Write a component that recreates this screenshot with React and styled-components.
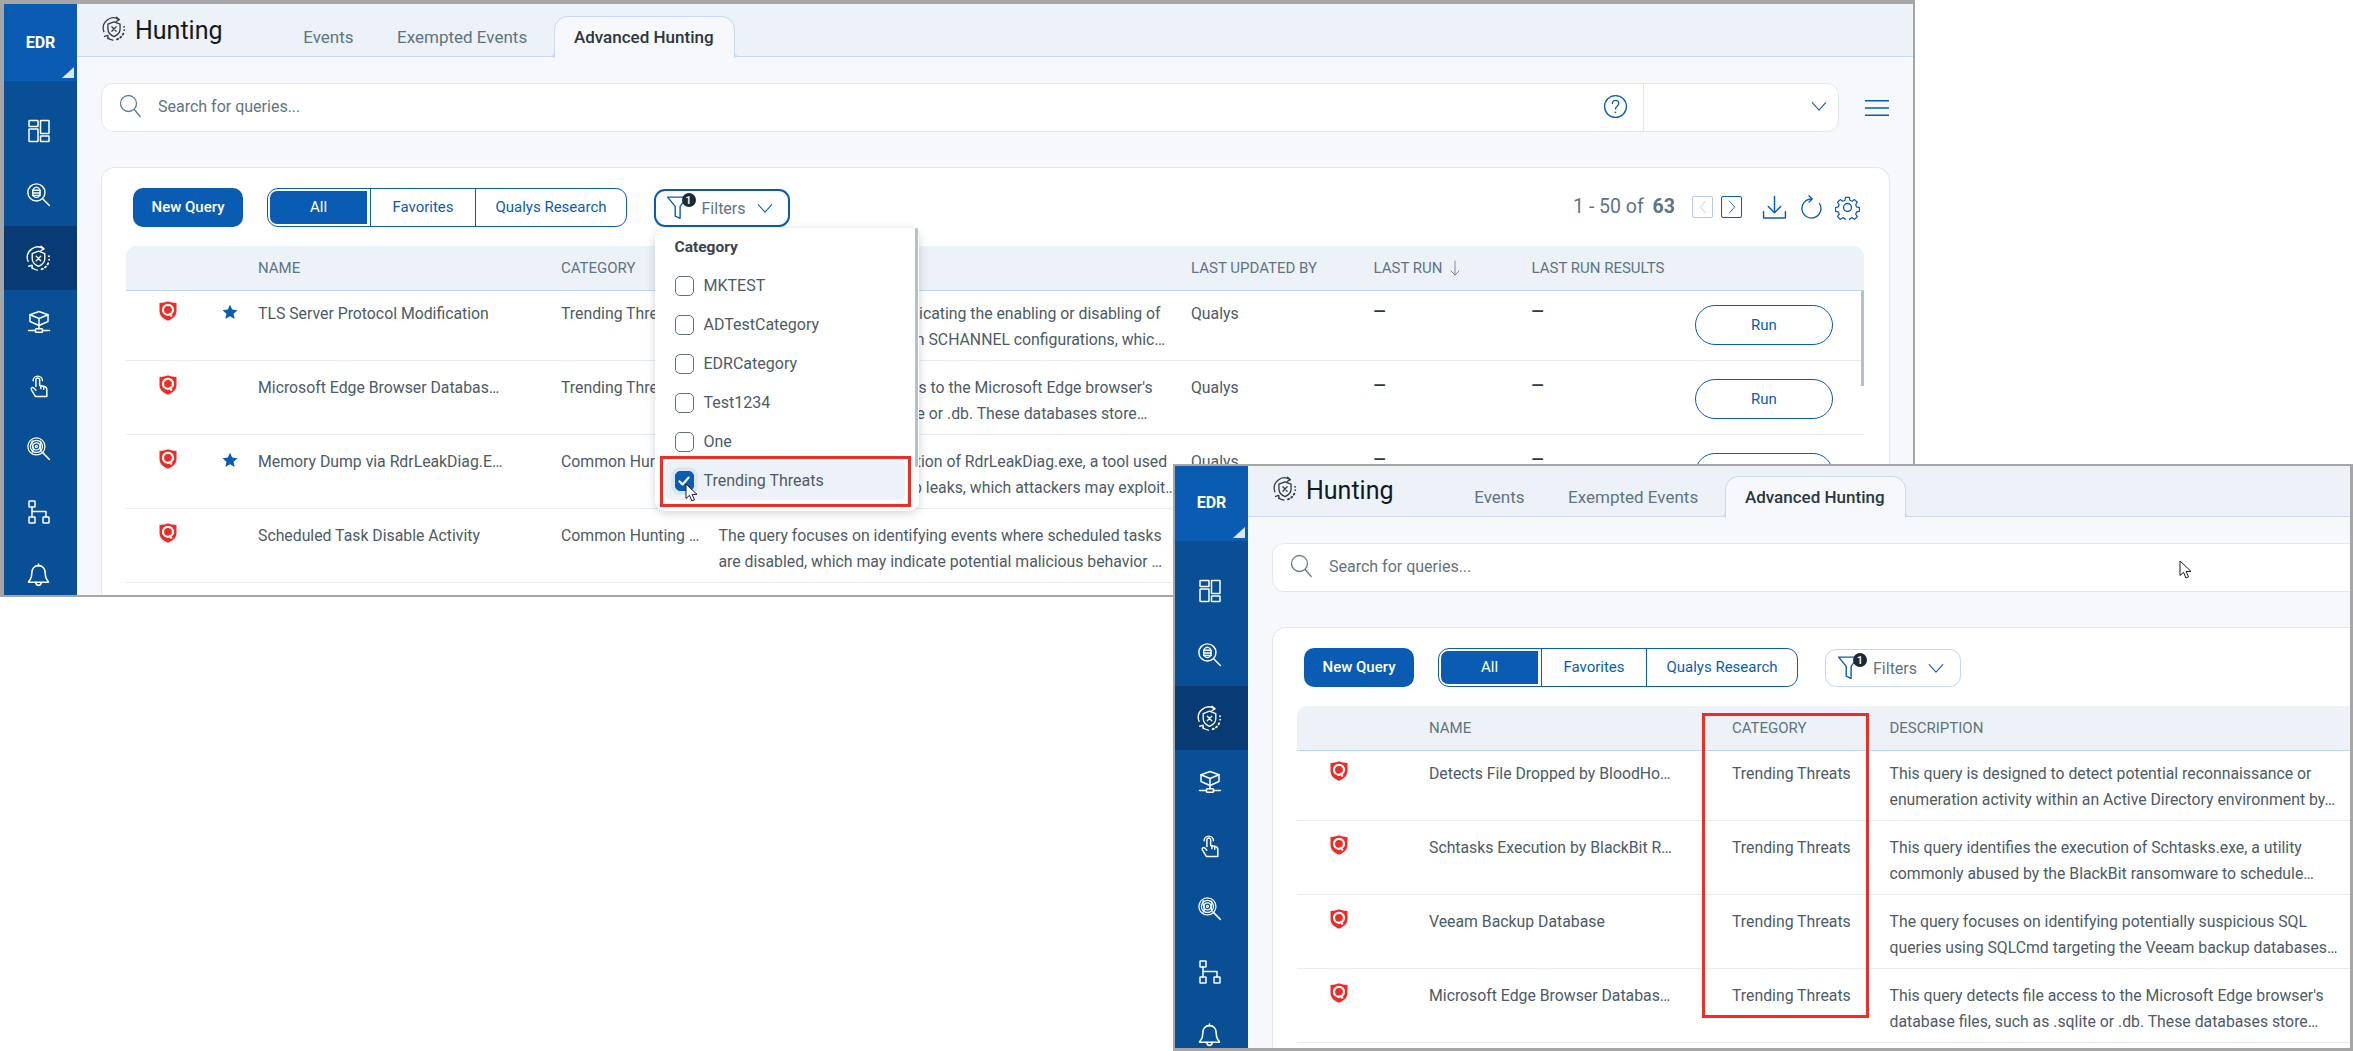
import React from "react";
import styled, { createGlobalStyle } from "styled-components";

const BLUE = "#0a5cb2";
const GRAY_TEXT = "#4d5b66";
const MUTED = "#5f7482";

const GlobalStyle = createGlobalStyle`
    html, body {
        margin: 0;
        padding: 0;
        background: #ffffff;
    }
    * {
        box-sizing: border-box;
    }
    body {
        font-family: Roboto, "Liberation Sans", sans-serif;
        color: ${GRAY_TEXT};
    }
`;

const Desktop = styled.div`
    position: relative;
    width: 2353px;
    height: 1051px;
    overflow: hidden;
    background: #ffffff;
`;

const Window = styled.div`
    position: absolute;
    left: ${(props) => props.$left}px;
    top: ${(props) => props.$top}px;
    width: ${(props) => props.$width}px;
    height: ${(props) => props.$height}px;
    border-style: solid;
    border-color: #a6a6a6;
    border-width: ${(props) => props.$borders};
    overflow: hidden;
    background: #f6f8fb;
`;

const Screen = styled.div`
    display: flex;
    height: calc(100% + ${(props) => props.$lift || 0}px);
    margin-top: -${(props) => props.$lift || 0}px;
`;

const Sidebar = styled.nav`
    flex: none;
    width: 73px;
    background: #084f95;
    display: flex;
    flex-direction: column;
    overflow: hidden;
`;

const Brand = styled.div`
    position: relative;
    flex: none;
    height: 77px;
    background: ${BLUE};
    color: #ffffff;
    font-size: 16px;
    font-weight: 700;
    display: flex;
    align-items: center;
    justify-content: center;
    margin-bottom: 18px;
    &::after {
        content: "";
        position: absolute;
        right: 3px;
        bottom: 3px;
        border-style: solid;
        border-width: 0 0 11px 12px;
        border-color: transparent transparent #dbe7f3 transparent;
    }
`;

const NavItem = styled.div`
    flex: none;
    height: 63.5px;
    display: flex;
    align-items: center;
    justify-content: center;
    padding: 1px 4px 0 0;
    color: #ffffff;
    background: ${(props) => (props.$active ? "#083a73" : "transparent")};
`;

const Main = styled.div`
    flex: none;
    width: 1836px;
    display: flex;
    flex-direction: column;
`;

const TopBar = styled.header`
    height: 53px;
    flex: none;
    background: #edf2f9;
    border-bottom: 1px solid #c9dbee;
    display: flex;
    align-items: flex-start;
    padding-left: 24px;
`;

const TitleIcon = styled.div`
    margin-top: 12px;
    margin-right: 8px;
    color: #2f3b45;
    display: flex;
`;

const PageTitle = styled.h1`
    margin: 12px 59px 0 0;
    font-size: 25px;
    font-weight: 400;
    line-height: 30px;
    color: #14191e;
`;

const Tabs = styled.div`
    display: flex;
    align-items: flex-end;
    height: 53px;
`;

const Tab = styled.div`
    position: relative;
    height: ${(props) => (props.$active ? "42px" : "41px")};
    padding: 0 21.75px;
    display: flex;
    align-items: center;
    font-size: 17px;
    color: ${MUTED};
    ${(props) =>
        props.$active &&
        `
        margin: 0 0 -1px 5px;
        padding: 0 20px 1px 19px;
        background: #f6f8fb;
        color: #2a3640;
        font-weight: 500;
        border: 1px solid #c9dbee;
        border-bottom: none;
        border-radius: 14px 14px 0 0;
        &::before, &::after {
            content: "";
            position: absolute;
            bottom: 1px;
            width: 4px;
            height: 8px;
            border-bottom: 1px solid #c9dbee;
        }
        &::before {
            left: -5px;
            border-right: 1px solid #c9dbee;
            border-bottom-right-radius: 5px;
        }
        &::after {
            right: -5px;
            border-left: 1px solid #c9dbee;
            border-bottom-left-radius: 5px;
        }
    `}
`;

const SearchRow = styled.div`
    margin: 26px 0 0 24px;
    display: flex;
    align-items: center;
    height: 49px;
    flex: none;
`;

const SearchBox = styled.div`
    width: 1738px;
    height: 49px;
    background: #ffffff;
    border: 1px solid #e2e7ed;
    border-radius: 12px;
    display: flex;
    align-items: center;
    padding: 0 0 3px 16px;
`;

const SearchIconWrap = styled.div`
    display: flex;
    color: #5d7c8f;
    margin-right: 16px;
`;

const SearchPlaceholder = styled.div`
    flex: 1;
    font-size: 16px;
    color: ${MUTED};
`;

const HelpWrap = styled.div`
    display: flex;
    color: ${BLUE};
    margin-right: 15px;
`;

const ScopeSelect = styled.div`
    width: 195px;
    align-self: stretch;
    margin-bottom: -3px;
    padding: 0 10px 3px 0;
    border-left: 1px solid #e2e7ed;
    display: flex;
    align-items: center;
    justify-content: flex-end;
    color: ${BLUE};
`;

const MenuButton = styled.div`
    margin-left: 26px;
    display: flex;
    color: ${BLUE};
`;

const Card = styled.section`
    margin: 35px 0 0 24px;
    width: 1789px;
    flex: 1;
    background: #ffffff;
    border: 1px solid #e2e7ed;
    border-bottom: none;
    border-radius: 14px 14px 0 0;
    padding: 19px 25px 0 24px;
`;

const Toolbar = styled.div`
    display: flex;
    align-items: center;
    height: 40px;
    padding: 0 4px 0 7px;
`;

const PrimaryButton = styled.button`
    width: 110px;
    height: 39px;
    margin-right: 24px;
    background: ${BLUE};
    color: #ffffff;
    border: none;
    border-radius: 10px;
    font-family: inherit;
    font-size: 15px;
    font-weight: 500;
`;

const Segments = styled.div`
    display: flex;
    height: 39px;
    border: 1.5px solid ${BLUE};
    border-radius: 11px;
    overflow: hidden;
    margin-right: 26.5px;
`;

const Segment = styled.div`
    width: ${(props) => props.$width}px;
    display: flex;
    align-items: center;
    justify-content: center;
    font-size: 15px;
    color: ${BLUE};
    border-left: ${(props) => (props.$first ? "none" : `1.5px solid ${BLUE}`)};
    ${(props) =>
        props.$active &&
        `
        color: #ffffff;
        background: ${BLUE};
        background-clip: content-box;
        padding: 2px 3px 2px 2px;
        border-radius: 9px 0 0 9px;
    `}
`;

const FilterWrap = styled.div`
    position: relative;
    margin-top: 2px;
`;

const FilterButton = styled.div`
    position: relative;
    width: 136px;
    height: 38px;
    border-radius: 11px;
    border: ${(props) => (props.$open ? `2.5px solid ${BLUE}` : "1px solid #c5d8ee")};
    display: flex;
    align-items: center;
    padding-left: ${(props) => (props.$open ? "10px" : "11.5px")};
    font-size: 16px;
    color: ${MUTED};
    gap: 10px;
`;

const FunnelWrap = styled.div`
    position: relative;
    display: flex;
    color: ${BLUE};
`;

const CountBadge = styled.span`
    position: absolute;
    right: -4px;
    top: -2px;
    width: 14px;
    height: 14px;
    border-radius: 50%;
    background: #1d2a35;
    color: #ffffff;
    font-size: 11px;
    font-weight: 500;
    display: flex;
    align-items: center;
    justify-content: center;
`;

const ChevronWrap = styled.div`
    display: flex;
    color: ${BLUE};
`;

const FilterMenu = styled.div`
    position: absolute;
    left: 1px;
    top: 39px;
    width: 264px;
    height: 283px;
    background: #ffffff;
    border-radius: 10px;
    box-shadow: 0 2px 10px rgba(40, 60, 80, 0.22);
    padding: 8px 9px 0 10px;
    z-index: 5;
    &::after {
        content: "";
        position: absolute;
        right: 1px;
        top: 0;
        width: 3px;
        height: 239px;
        background: #b3c1cc;
        border-radius: 2px;
    }
`;

const MenuTitle = styled.div`
    font-size: 15.5px;
    font-weight: 700;
    line-height: 22px;
    color: #38444e;
    padding-left: 10px;
    margin-bottom: 8px;
`;

const MenuRow = styled.div`
    position: relative;
    width: 240.5px;
    height: 39px;
    padding-left: 10px;
    display: flex;
    align-items: center;
    gap: 10px;
    font-size: 16px;
    border-radius: 6px;
    ${(props) =>
        props.$selected &&
        `
        background: #edf2f9;
        &::after {
            content: "";
            position: absolute;
            left: -4.5px;
            right: -6px;
            top: -5px;
            bottom: -7px;
            border: 3px solid #ee2e24;
        }
    `}
`;

const CheckBox = styled.span`
    width: 19px;
    height: 20px;
    flex: none;
    border-radius: 5px;
    border: 1px solid ${(props) => (props.$checked ? BLUE : "#5d7180")};
    background: ${(props) => (props.$checked ? BLUE : "#ffffff")};
    box-shadow: ${(props) => (props.$checked ? "0 0 0 4px #dbe6f3" : "none")};
    display: flex;
    align-items: center;
    justify-content: center;
    color: #ffffff;
`;

const PagerArea = styled.div`
    margin-left: auto;
    display: flex;
    align-items: center;
    color: ${BLUE};
`;

const PageCount = styled.div`
    font-size: 19.5px;
    color: ${MUTED};
    margin: 0 17px 2px 0;
    white-space: nowrap;
    b {
        font-weight: 700;
        margin-left: 4px;
    }
`;

const PageStep = styled.div`
    width: 21px;
    height: 22px;
    border: 1.5px solid ${(props) => (props.$disabled ? "#b7c9da" : BLUE)};
    color: ${(props) => (props.$disabled ? "#b7c9da" : BLUE)};
    border-radius: 2px;
    display: flex;
    align-items: center;
    justify-content: center;
    margin-right: ${(props) => (props.$disabled ? "8px" : "20px")};
`;

const ToolIcon = styled.div`
    display: flex;
    margin-right: ${(props) => props.$gap || 0}px;
`;

const Table = styled.div`
    position: relative;
    margin-top: 19px;
`;

const columns = "84px 40px 311px 157.5px 472.5px 182.5px 158px 163.5px 169px";

const HeadRow = styled.div`
    display: grid;
    grid-template-columns: ${columns};
    align-items: center;
    height: 45px;
    background: #edf2f9;
    border-bottom: 1px solid #bcd6ee;
    border-radius: 10px 10px 0 0;
`;

const HeadCell = styled.div`
    font-size: 15px;
    text-transform: uppercase;
    color: ${MUTED};
    display: flex;
    align-items: center;
    gap: 5px;
    padding-left: ${(props) => (props.$name ? "8px" : "0")};
`;

const Row = styled.div`
    display: grid;
    grid-template-columns: ${columns};
    align-items: start;
    height: ${(props) => (props.$first ? "70px" : "74px")};
    padding-top: ${(props) => (props.$first ? "10px" : "14px")};
    border-bottom: 1px solid #e6ebf0;
    font-size: 15.8px;
    line-height: 25.5px;
`;

const LogoCell = styled.div`
    display: flex;
    justify-content: center;
`;

const StarCell = styled.div`
    display: flex;
    justify-content: center;
    padding-top: 3px;
    color: ${BLUE};
`;

const NameCell = styled.div`
    padding-left: 8px;
    white-space: nowrap;
`;

const TextCell = styled.div`
    white-space: nowrap;
`;

const DescLine = styled.div`
    white-space: nowrap;
`;

const Dash = styled.div`
    font-weight: 700;
    color: #2c3a45;
    line-height: 22px;
`;

const RunButton = styled.button`
    width: 138px;
    height: 40px;
    margin-top: 4px;
    background: #ffffff;
    border: 1.5px solid ${BLUE};
    border-radius: 20px;
    color: ${BLUE};
    font-family: inherit;
    font-size: 15px;
`;

const ScrollThumb = styled.div`
    position: absolute;
    right: 0;
    top: 45px;
    width: 3px;
    height: 95px;
    background: #b3c1cc;
`;

const Callout = styled.div`
    position: absolute;
    left: 527px;
    top: 247px;
    width: 167px;
    height: 305px;
    border: 3px solid #ee2e24;
    z-index: 4;
`;

const CursorMark = styled.svg`
    position: absolute;
    left: ${(props) => props.$x}px;
    top: ${(props) => props.$y}px;
    z-index: 6;
`;

const Line = ({ size = 22, children, sw = 1.4 }) => (
    <svg
        width={size}
        height={size}
        viewBox="0 0 24 24"
        fill="none"
        stroke="currentColor"
        strokeWidth={sw}
        strokeLinecap="round"
        strokeLinejoin="round"
    >
        {children}
    </svg>
);

const HuntingIcon = ({ size = 26, sw = 1.2 }) => (
    <Line size={size} sw={sw}>
        <path d="M12 5.500l5.600 2.100v4.500c0 3.400-2.500 5.700-5.600 6.900-3.100-1.200-5.600-3.500-5.600-6.900V7.600z" />
        <path d="M10 10l4 4M14 10l-4 4" />
        <path d="M2.700 14.500A9.400 9.400 0 0 1 16.500 3.200" />
        <path d="M14.300 1.100l2.600 2.300-2.900 1.700" />
        <path d="M6.200 20.300a9.400 9.400 0 0 0 4.800 2" />
        <path d="M3.300 18.900l3-1 .2 3.100" />
        <path d="M21.300 10v.01M21.500 13v.01M20.600 16.300l-.5.9M18.600 19.200l-.8.7M15.800 21.100l-1 .4" strokeWidth={sw + 0.5} />
    </Line>
);

const DashboardIcon = () => (
    <Line size={24} sw={1.5}>
        <rect x="2" y="1.500" width="9" height="6" rx="0.5" />
        <rect x="2" y="10" width="9" height="12.500" rx="0.5" />
        <rect x="13.500" y="1.500" width="8.500" height="13" rx="0.5" />
        <rect x="13.500" y="17" width="8.500" height="5.500" rx="0.5" />
    </Line>
);

const ThreatSearchIcon = () => (
    <Line size={25} sw={1.4}>
        <circle cx="10" cy="10" r="8.200" />
        <ellipse cx="10" cy="10" rx="3.600" ry="5" />
        <path d="M6.400 8h7.200M6.400 10.500h7.200M6.400 13h7.200" />
        <path d="M16 16l6.500 6.500" />
    </Line>
);

const CubeIcon = () => (
    <Line size={24} sw={1.5}>
        <path d="M12 1.500l9 3.200v6.800l-9 4-9-4V4.700z" />
        <path d="M3 4.700l9 3.800 9-3.800M12 8.500v7" />
        <path d="M1.500 20.500h7M15.500 20.500h7" />
        <rect x="8.500" y="18.800" width="7" height="3.400" rx="0.8" />
        <path d="M12 15.500v3.300" />
    </Line>
);

const HandIcon = () => (
    <Line size={25} sw={1.4}>
        <path d="M9.500 13V6.500a1.800 1.800 0 0 1 3.600 0V12l4.400 1c1.600.4 2.500 1.500 2.500 3v6.500H9l-3.800-6.200c-.9-1.600 1-3.100 2.300-1.800l2 2" />
        <path d="M6.800 7.500a4.500 4.500 0 1 1 9 0" />
        <path d="M14.300 12v3M17 12.800v2.700" />
    </Line>
);

const FingerprintIcon = () => (
    <Line size={25} sw={1.2}>
        <circle cx="10" cy="10" r="8.200" />
        <circle cx="10" cy="10" r="5.800" />
        <circle cx="10" cy="10" r="3.300" />
        <circle cx="10" cy="10" r="1" />
        <path d="M6 4.500c-2 3 3 8 0 11M14 5c1.500 3-2 6 .5 10" />
        <path d="M16 16l6.500 6.500" strokeWidth={1.5} />
    </Line>
);

const TreeIcon = () => (
    <Line size={24} sw={1.5}>
        <rect x="2" y="1" width="6" height="6" rx="0.5" />
        <rect x="2" y="17" width="6" height="6" rx="0.5" />
        <rect x="16" y="17" width="6" height="6" rx="0.5" />
        <path d="M5 7v10M5 11.500h14V17" />
    </Line>
);

const BellIcon = () => (
    <Line size={25} sw={1.5}>
        <path d="M12 2.500c-4 0-6.500 3-6.500 7.500 0 4-1.200 6-3 7.800v.7h19v-.7c-1.800-1.800-3-3.800-3-7.800 0-4.500-2.500-7.500-6.500-7.500z" />
        <path d="M12 1v1.500M9.500 18.500c0 4 5 4 5 0" />
    </Line>
);

const MagnifierIcon = () => (
    <Line size={24} sw={1.3}>
        <circle cx="10.500" cy="9.500" r="8" />
        <path d="M16.200 15.500l6 7" />
    </Line>
);

const HelpIcon = () => (
    <Line size={25} sw={1.2}>
        <circle cx="12" cy="12" r="10.500" />
        <path d="M9 9.200c.1-2 1.400-3.200 3.100-3.200 1.800 0 3 1.200 3 2.900 0 2.800-3.100 2.800-3.100 5.600" />
        <path d="M12 17.500v.2" strokeWidth={1.6} />
    </Line>
);

const ChevronDown = ({ size = 18 }) => (
    <Line size={size} sw={1.4}>
        <path d="M3 7.500l9 10 9-10" />
    </Line>
);

const HamburgerIcon = () => (
    <svg width="24" height="16" viewBox="0 0 24 16" fill="currentColor">
        <rect width="24" height="1.500" />
        <rect y="7.250" width="24" height="1.500" />
        <rect y="14.500" width="24" height="1.500" />
    </svg>
);

const FunnelIcon = () => (
    <Line size={26} sw={1.3}>
        <path d="M1.500 2h18l-6.500 8.500v11l-4.500-2V10.500z" />
    </Line>
);

const StepLeft = () => (
    <Line size={16} sw={1.3}>
        <path d="M16 3l-8 9 8 9" />
    </Line>
);

const StepRight = () => (
    <Line size={16} sw={1.3}>
        <path d="M8 3l8 9-8 9" />
    </Line>
);

const DownloadIcon = () => (
    <Line size={25} sw={1.4}>
        <path d="M12 1.500v15M6 11l6 6 6-6" />
        <path d="M1.500 16v6h21v-6" />
    </Line>
);

const RefreshIcon = () => (
    <Line size={24} sw={1.3}>
        <path d="M12.500 4A9.500 9.500 0 1 0 20.500 8.500" />
        <path d="M10 .8l3.200 3.200-3.200 3" />
    </Line>
);

const GearIcon = () => (
    <Line size={25} sw={1.3}>
        <circle cx="12" cy="12" r="3.800" />
        <path d="M10 1.500h4l.6 3 2.300 1 2.600-1.700 2.800 2.800-1.700 2.600 1 2.300 3 .6-.1 4-2.900.6-1 2.300 1.700 2.600-2.800 2.800-2.600-1.700-2.300 1-.6 2.900h-4l-.6-2.900-2.300-1-2.600 1.700-2.800-2.800 1.700-2.600-1-2.300-2.900-.6v-4l2.900-.6 1-2.300-1.700-2.600 2.800-2.800 2.600 1.700 2.300-1z" transform="translate(0.900 0.900) scale(0.92)" />
    </Line>
);

const SortArrow = () => (
    <Line size={16} sw={1.2}>
        <path d="M12 1.500v21M6 16.500l6 6 6-6" />
    </Line>
);

const QualysLogo = () => (
    <svg width="18" height="20" viewBox="0 0 18 20">
        <path
            d="M9 .3c2.500 1.300 5.500 1.700 8.500 1.700v8.200c0 4.200-3.600 7.700-8.500 9.500C4.100 17.900.5 14.400.5 10.200V2C3.500 2 6.500 1.600 9 .3z"
            fill="#ea2d27"
        />
        <circle cx="9" cy="8.800" r="5" fill="none" stroke="#ffffff" strokeWidth="2.200" />
        <path d="M10.500 12l2.200 3.500" stroke="#ffffff" strokeWidth="2" />
    </svg>
);

const StarIcon = () => (
    <svg width="16" height="16" viewBox="0 0 24 24" fill="currentColor">
        <path d="M12 1l3.300 7.400 8 .8-6 5.400 1.700 7.900L12 18.500l-7 4 1.700-7.900-6-5.400 8-.8z" />
    </svg>
);

const PointerArrow = ({ x, y }) => (
    <CursorMark $x={x} $y={y} width="13" height="20" viewBox="0 0 13 20">
        <path
            d="M1 1v14.500l3.500-3.200 2.400 5.700 2.600-1.100-2.400-5.500H12z"
            fill="#ffffff"
            stroke="#1a1a1a"
            strokeWidth="1"
        />
    </CursorMark>
);

const categoryOptions = ["MKTEST", "ADTestCategory", "EDRCategory", "Test1234", "One"];

const navIcons = [
    <DashboardIcon key="dash" />,
    <ThreatSearchIcon key="threat" />,
    <HuntingIcon key="hunt" size={27} sw={1.2} />,
    <CubeIcon key="cube" />,
    <HandIcon key="hand" />,
    <FingerprintIcon key="finger" />,
    <TreeIcon key="tree" />,
    <BellIcon key="bell" />,
];

const firstRows = [
    {
        star: true,
        name: "TLS Server Protocol Modification",
        category: "Trending Threats",
        desc: [
            "This query flags changes indicating the enabling or disabling of",
            "TLS server protocols found in SCHANNEL configurations, whic…",
        ],
    },
    {
        name: "Microsoft Edge Browser Databas…",
        category: "Trending Threats",
        desc: [
            "This query detects file access to the Microsoft Edge browser's",
            "database files, such as .sqlite or .db. These databases store…",
        ],
    },
    {
        star: true,
        name: "Memory Dump via RdrLeakDiag.E…",
        category: "Common Hunting …",
        desc: [
            "The query detects the execution of RdrLeakDiag.exe, a tool used",
            "to get memory dumps of app leaks, which attackers may exploit…",
        ],
    },
    {
        name: "Scheduled Task Disable Activity",
        category: "Common Hunting …",
        desc: [
            "The query focuses on identifying events where scheduled tasks",
            "are disabled, which may indicate potential malicious behavior …",
        ],
    },
];

const secondRows = [
    {
        name: "Detects File Dropped by BloodHo…",
        category: "Trending Threats",
        desc: [
            "This query is designed to detect potential reconnaissance or",
            "enumeration activity within an Active Directory environment by…",
        ],
    },
    {
        name: "Schtasks Execution by BlackBit R…",
        category: "Trending Threats",
        desc: [
            "This query identifies the execution of Schtasks.exe, a utility",
            "commonly abused by the BlackBit ransomware to schedule…",
        ],
    },
    {
        name: "Veeam Backup Database",
        category: "Trending Threats",
        desc: [
            "The query focuses on identifying potentially suspicious SQL",
            "queries using SQLCmd targeting the Veeam backup databases…",
        ],
    },
    {
        name: "Microsoft Edge Browser Databas…",
        category: "Trending Threats",
        desc: [
            "This query detects file access to the Microsoft Edge browser's",
            "database files, such as .sqlite or .db. These databases store…",
        ],
    },
];

const FilterDropdown = () => (
    <FilterMenu>
        <MenuTitle>Category</MenuTitle>
        {categoryOptions.map((option) => (
            <MenuRow key={option}>
                <CheckBox />
                {option}
            </MenuRow>
        ))}
        <MenuRow $selected>
            <CheckBox $checked>
                <Line size={14} sw={3.5}>
                    <path d="M4 12.500l5.500 5.500L20 6" />
                </Line>
            </CheckBox>
            Trending Threats
        </MenuRow>
    </FilterMenu>
);

const HuntingScreen = ({ rows, filtersOpen, showScroll, lift }) => (
    <Screen $lift={lift}>
        <Sidebar>
            <Brand>EDR</Brand>
            {navIcons.map((icon, index) => (
                <NavItem key={icon.key} $active={index === 2}>
                    {icon}
                </NavItem>
            ))}
        </Sidebar>
        <Main>
            <TopBar>
                <TitleIcon>
                    <HuntingIcon />
                </TitleIcon>
                <PageTitle>Hunting</PageTitle>
                <Tabs>
                    <Tab>Events</Tab>
                    <Tab>Exempted Events</Tab>
                    <Tab $active>Advanced Hunting</Tab>
                </Tabs>
            </TopBar>
            <SearchRow>
                <SearchBox>
                    <SearchIconWrap>
                        <MagnifierIcon />
                    </SearchIconWrap>
                    <SearchPlaceholder>Search for queries...</SearchPlaceholder>
                    <HelpWrap>
                        <HelpIcon />
                    </HelpWrap>
                    <ScopeSelect>
                        <ChevronDown />
                    </ScopeSelect>
                </SearchBox>
                <MenuButton>
                    <HamburgerIcon />
                </MenuButton>
            </SearchRow>
            <Card>
                <Toolbar>
                    <PrimaryButton>New Query</PrimaryButton>
                    <Segments>
                        <Segment $first $active $width={102}>
                            All
                        </Segment>
                        <Segment $width={105}>Favorites</Segment>
                        <Segment $width={151}>Qualys Research</Segment>
                    </Segments>
                    <FilterWrap>
                        <FilterButton $open={filtersOpen}>
                            <FunnelWrap>
                                <FunnelIcon />
                                <CountBadge>1</CountBadge>
                            </FunnelWrap>
                            Filters
                            <ChevronWrap>
                                <ChevronDown />
                            </ChevronWrap>
                        </FilterButton>
                        {filtersOpen && <FilterDropdown />}
                    </FilterWrap>
                    <PagerArea>
                        <PageCount>
                            1 - 50 of <b>63</b>
                        </PageCount>
                        <PageStep $disabled>
                            <StepLeft />
                        </PageStep>
                        <PageStep>
                            <StepRight />
                        </PageStep>
                        <ToolIcon $gap={12}>
                            <DownloadIcon />
                        </ToolIcon>
                        <ToolIcon $gap={12}>
                            <RefreshIcon />
                        </ToolIcon>
                        <ToolIcon>
                            <GearIcon />
                        </ToolIcon>
                    </PagerArea>
                </Toolbar>
                <Table>
                    <HeadRow>
                        <span />
                        <span />
                        <HeadCell $name>Name</HeadCell>
                        <HeadCell>Category</HeadCell>
                        <HeadCell>Description</HeadCell>
                        <HeadCell>Last Updated By</HeadCell>
                        <HeadCell>
                            Last Run
                            <SortArrow />
                        </HeadCell>
                        <HeadCell>Last Run Results</HeadCell>
                        <span />
                    </HeadRow>
                    {rows.map((row, index) => (
                        <Row key={row.name} $first={index === 0}>
                            <LogoCell>
                                <QualysLogo />
                            </LogoCell>
                            <StarCell>{row.star && <StarIcon />}</StarCell>
                            <NameCell>{row.name}</NameCell>
                            <TextCell>{row.category}</TextCell>
                            <div>
                                <DescLine>{row.desc[0]}</DescLine>
                                <DescLine>{row.desc[1]}</DescLine>
                            </div>
                            <TextCell>Qualys</TextCell>
                            <Dash>—</Dash>
                            <Dash>—</Dash>
                            <div>
                                <RunButton>Run</RunButton>
                            </div>
                        </Row>
                    ))}
                    {showScroll && <ScrollThumb />}
                </Table>
            </Card>
        </Main>
    </Screen>
);

const App = () => {
    return (
        <Desktop>
            <GlobalStyle />
            <Window $left={0} $top={0} $width={1915} $height={597} $borders="4px 2px 2px 4px">
                <HuntingScreen rows={firstRows} filtersOpen showScroll />
                <PointerArrow x={681} y={479} />
            </Window>
            <Window $left={1173} $top={464} $width={1180} $height={587} $borders="2px 3px 3px 2px">
                <HuntingScreen rows={secondRows} lift={2} />
                <Callout />
                <PointerArrow x={1004} y={94} />
            </Window>
        </Desktop>
    );
};

export default App;
